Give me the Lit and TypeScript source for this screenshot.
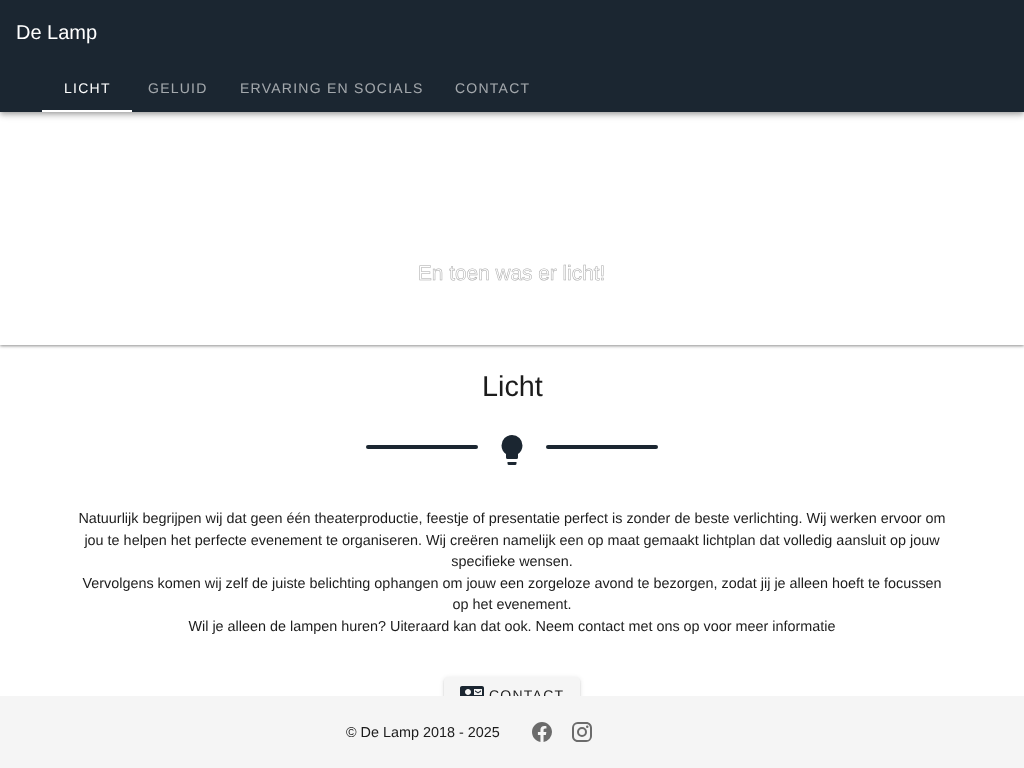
import { LitElement, html, css } from "lit";
import { customElement } from "lit/decorators.js";

const ICONS = {
  bulb: "M12,2A7,7 0 0,0 5,9C5,11.38 6.19,13.47 8,14.74V17A1,1 0 0,0 9,18H15A1,1 0 0,0 16,17V14.74C17.81,13.47 19,11.38 19,9A7,7 0 0,0 12,2M9,21A1,1 0 0,0 10,22H14A1,1 0 0,0 15,21V20H9V21Z",
  card: "M2 3C.9 3 0 3.9 0 5V19C0 20.1 .9 21 2 21H22C23.1 21 24 20.1 24 19V5C24 3.9 23.1 3 22 3H2M8 6C9.66 6 11 7.34 11 9S9.66 12 8 12 5 10.66 5 9 6.34 6 8 6M14 6H22V12H14V6M15 7.2V8.4L18 10.4L21 8.4V7.2L18 9.2L15 7.2M8 14C11 14 13.5 15.3 14 17V18H2V17C2.5 15.3 5 14 8 14Z",
  fb: "M12 2.04C6.5 2.04 2 6.53 2 12.06C2 17.06 5.66 21.21 10.44 21.96V14.96H7.9V12.06H10.44V9.85C10.44 7.34 11.93 5.96 14.22 5.96C15.31 5.96 16.45 6.15 16.45 6.15V8.62H15.19C13.95 8.62 13.56 9.39 13.56 10.18V12.06H16.34L15.9 14.96H13.56V21.96A10 10 0 0 0 22 12.06C22 6.53 17.5 2.04 12 2.04Z",
  ig: "M7.8,2H16.2C19.4,2 22,4.6 22,7.8V16.2A5.8,5.8 0 0,1 16.2,22H7.8C4.6,22 2,19.4 2,16.2V7.8A5.8,5.8 0 0,1 7.8,2M7.6,4A3.6,3.6 0 0,0 4,7.6V16.4C4,18.39 5.61,20 7.6,20H16.4A3.6,3.6 0 0,0 20,16.4V7.6C20,5.61 18.39,4 16.4,4H7.6M17.25,5.5A1.25,1.25 0 0,1 18.5,6.75A1.25,1.25 0 0,1 17.25,8A1.25,1.25 0 0,1 16,6.75A1.25,1.25 0 0,1 17.25,5.5M12,7A5,5 0 0,1 17,12A5,5 0 0,1 12,17A5,5 0 0,1 7,12A5,5 0 0,1 12,7M12,9A3,3 0 0,0 9,12A3,3 0 0,0 12,15A3,3 0 0,0 15,12A3,3 0 0,0 12,9Z",
};

const icon = (d: string, cls: string) =>
  html`<svg class=${cls} viewBox="0 0 24 24" aria-hidden="true"><path d=${d}></path></svg>`;

@customElement("app-root")
export class AppRoot extends LitElement {
  static styles = css`
    :host {
      display: flex;
      flex-direction: column;
      height: 768px;
      overflow: hidden;
      background: #fff;
      font-family: "Liberation Sans", Arial, sans-serif;
      color: #1c1c1c;
      text-rendering: geometricPrecision;
    }
    .gray {
      will-change: transform;
    }
    .bar {
      flex: none;
      height: 112px;
      background: #1b2631;
      color: #fff;
      box-shadow: 0 2px 4px -1px rgba(0, 0, 0, 0.2), 0 4px 5px 0 rgba(0, 0, 0, 0.14), 0 1px 10px 0 rgba(0, 0, 0, 0.12);
      position: relative;
      z-index: 3;
    }
    .title-row {
      height: 64px;
      box-sizing: border-box;
      padding: 2px 0 0 16px;
      display: flex;
      align-items: center;
      font-size: 20px;
    }
    .tabs {
      height: 48px;
      display: flex;
      padding-left: 42px;
    }
    .tab {
      min-width: 90px;
      box-sizing: border-box;
      padding: 0 16px;
      display: flex;
      align-items: center;
      justify-content: center;
      font-size: 14px;
      letter-spacing: 1.25px;
      text-transform: uppercase;
      color: rgba(255, 255, 255, 0.6);
    }
    .tab.active {
      color: #fff;
      border-bottom: 2px solid #fff;
      padding-top: 2px;
    }
    .main {
      flex: 1;
      min-height: 0;
      overflow: hidden;
    }
    .hero {
      height: 233px;
      box-sizing: border-box;
      padding-top: 150px;
      text-align: center;
      font-size: 20.8px;
      line-height: 24px;
      box-shadow: 0 1px 3px rgba(0, 0, 0, 0.45);
    }
    .hero-text {
      display: inline-block;
      color: #fff;
      -webkit-text-stroke: 0.5px #a8a8a8;
    }
    .content {
      display: flex;
      flex-direction: column;
      align-items: center;
      padding: 25px 76px 0;
    }
    h1 {
      margin: 0;
      font-size: 28.8px;
      line-height: 34px;
      font-weight: 400;
      color: #1c1c1c;
    }
    .divider {
      margin-top: 22px;
      display: flex;
      align-items: center;
      gap: 16px;
    }
    .rule {
      width: 112px;
      height: 4px;
      border-radius: 2px;
      background: #1b2631;
    }
    .bulb {
      width: 36px;
      height: 36px;
      fill: #1b2631;
      display: block;
      margin-top: 6px;
    }
    p {
      margin: 41px 0 0;
      font-size: 14.4px;
      line-height: 21.6px;
      text-align: center;
    }
    .btn {
      margin-top: 38.4px;
      flex: none;
      height: 36px;
      box-sizing: border-box;
      padding: 0 16px;
      display: flex;
      align-items: center;
      gap: 5px;
      background: #f5f5f5;
      border-radius: 4px;
      font-size: 14px;
      letter-spacing: 1.25px;
      color: #1c1c1c;
      box-shadow: 0 3px 1px -2px rgba(0, 0, 0, 0.2), 0 2px 2px 0 rgba(0, 0, 0, 0.14), 0 1px 5px 0 rgba(0, 0, 0, 0.12);
    }
    .card {
      width: 24px;
      height: 24px;
      fill: #1b2631;
    }
    .footer {
      flex: none;
      height: 72px;
      box-sizing: border-box;
      padding-right: 84px;
      position: relative;
      z-index: 2;
      background: #f5f5f5;
      display: flex;
      align-items: center;
      justify-content: center;
      font-size: 14.4px;
    }
    .copy {
      margin-top: 2px;
    }
    .socials {
      display: flex;
      gap: 16px;
      margin-left: 30px;
    }
    .social {
      width: 24px;
      height: 24px;
      fill: #6b6b6b;
      display: block;
    }
  `;

  render() {
    const tabs = ["Licht", "Geluid", "Ervaring en socials", "Contact"];
    return html`
      <header class="bar">
        <div class="title-row"><span class="gray">De Lamp</span></div>
        <nav class="tabs">
          ${tabs.map((t, i) => html`<div class="tab ${i === 0 ? "active" : ""}"><span class="gray">${t}</span></div>`)}
        </nav>
      </header>
      <main class="main">
        <section class="hero"><span class="hero-text gray">En toen was er licht!</span></section>
        <section class="content">
          <h1 class="gray">Licht</h1>
          <div class="divider">
            <div class="rule"></div>
            ${icon(ICONS.bulb, "bulb")}
            <div class="rule"></div>
          </div>
          <p class="gray">
            Natuurlijk begrijpen wij dat geen één theaterproductie, feestje of presentatie perfect is zonder de beste verlichting. Wij werken ervoor om jou te helpen het perfecte evenement te organiseren. Wij creëren namelijk een op maat gemaakt lichtplan dat volledig aansluit op jouw specifieke wensen.<br />
            Vervolgens komen wij zelf de juiste belichting ophangen om jouw een zorgeloze avond te bezorgen, zodat jij je alleen hoeft te focussen op het evenement.<br />
            Wil je alleen de lampen huren? Uiteraard kan dat ook. Neem contact met ons op voor meer informatie
          </p>
          <div class="btn">${icon(ICONS.card, "card")}<span class="gray">CONTACT</span></div>
        </section>
      </main>
      <footer class="footer">
        <span class="gray copy">© De Lamp 2018 - 2025</span>
        <div class="socials">
          ${icon(ICONS.fb, "social")}
          ${icon(ICONS.ig, "social")}
        </div>
      </footer>
    `;
  }
}
